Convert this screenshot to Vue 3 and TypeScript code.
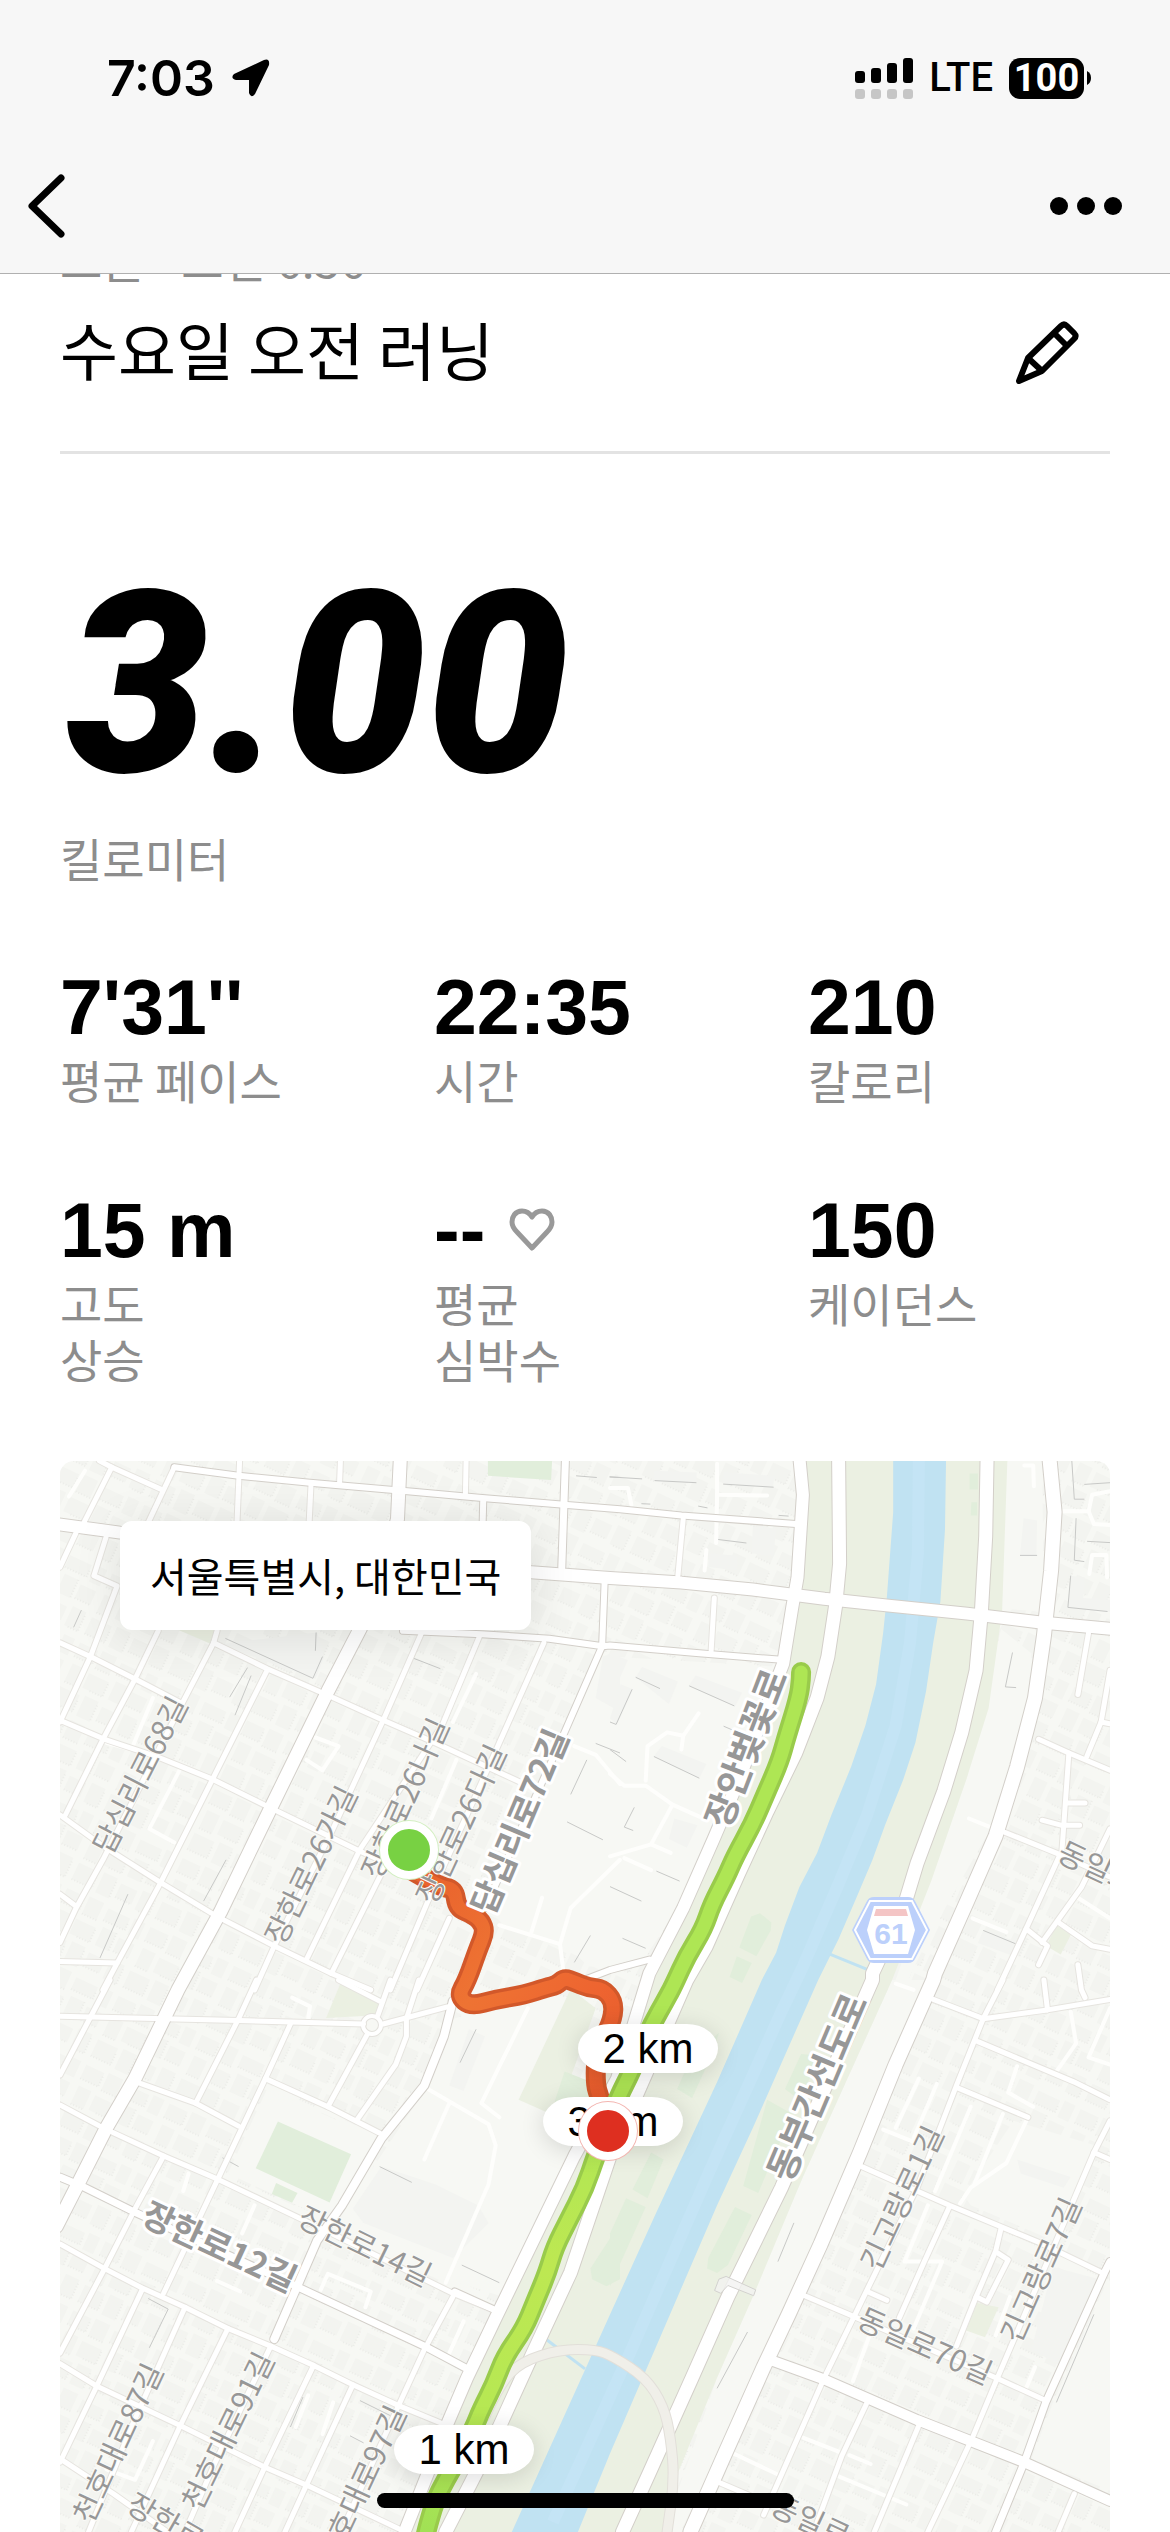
<script setup lang="ts">
interface Stat {
  value: string
  label: string[]
  heart?: boolean
}

const stats: Stat[] = [
  { value: "7'31''", label: ['평균 페이스'] },
  { value: '22:35', label: ['시간'] },
  { value: '210', label: ['칼로리'] },
  { value: '15 m', label: ['고도', '상승'] },
  { value: '--', label: ['평균', '심박수'], heart: true },
  { value: '150', label: ['케이던스'] },
]

type Sheet = 'nw' | 'ne' | 'sw' | 'se'
const sheets: Record<Sheet, { x: number; y: number; kx: number; ky: number }> = {
  nw: { x: 0, y: -11, kx: 2.8, ky: 2.904 },
  ne: { x: 550, y: -11, kx: 2.8, ky: 2.904 },
  sw: { x: 0, y: 519, kx: 2.8, ky: 2.841 },
  se: { x: 550, y: 519, kx: 2.8, ky: 2.841 },
}

/* "nw 0,10 20,30 se 5,5" becomes a list of map positions. */
function project(line: string): number[][] {
  let sheet = sheets.nw
  const out: number[][] = []
  for (const token of line.trim().split(/\s+/)) {
    if (token in sheets) {
      sheet = sheets[token as Sheet]
    } else {
      const [a, b] = token.split(',').map(Number)
      out.push([Math.round((a / sheet.kx + sheet.x) * 10) / 10, Math.round((b / sheet.ky + sheet.y) * 10) / 10])
    }
  }
  return out
}
const poly = (line: string): string => project(line).map((p) => p.join(',')).join(' ')

/* Smooth curve through the middle of each segment. */
function curve(line: string): string {
  const p = project(line)
  let d = `M${p[0]}`
  for (let i = 1; i < p.length - 1; i++) {
    const mx = (p[i][0] + p[i + 1][0]) / 2
    const my = (p[i][1] + p[i + 1][1]) / 2
    d += `Q${p[i]} ${mx},${my}`
  }
  return d + `L${p[p.length - 1]}`
}

const parkland = poly(
  'ne 550,20 550,130 540,400 510,560 480,700 400,900 300,1130 210,1330 sw 1640,0 1440,470 1220,960 1100,1260 960,1568 se 150,1568 190,1400 300,1130 400,900 540,560 790,0 ne 900,1250 1000,950 1060,750 1098,470 1113,20',
)
const river = poly(
  'ne 793,20 793,180 775,430 765,530 745,680 715,800 675,920 620,1060 580,1170 530,1270 490,1380 465,1460 se 425,0 300,290 130,660 0,950 sw 1265,1568 1450,1568 se 0,1345 100,1110 300,640 400,420 583,0 ne 640,1420 690,1300 735,1190 770,1090 820,960 855,850 885,700 905,560 925,440 938,230 941,20',
)
const riverGlow = poly('ne 865,20 862,300 840,560 800,800 720,1060 640,1260 540,1500 se 480,90 280,540 60,1050 sw 1380,1540')

const greens = [
  'nw 1198,31 1378,31 1375,87 1198,75',
  'sw 610,402 815,495 755,632 548,535',
  'sw 605,577 665,605 650,633 593,608',
  'sw 1413,260 1500,295 1470,385 1385,345',
  'ne 1007,68 1030,68 1030,115 1007,115',
  'ne 1012,152 1028,152 1028,190 1010,190',
  'ne 395,1355 420,1345 452,1372 450,1395 410,1470 362,1445',
  'ne 355,1470 397,1490 370,1548 335,1530',
  'se 225,225 305,150 290,200 230,335 188,310',
  'se 115,490 150,510 105,620 63,595',
  'se 45,620 100,645 0,870 0,720',
  'se 440,340 510,380 415,605 373,585',
  'se 350,645 397,668 330,810 300,832 272,820 275,790',
  'se 535,210 590,215 530,340 490,310',
  'sw 1568,690 1568,850 1530,870 1490,850 1485,820',
].map(poly)
const fields = [
  'nw 325,520 435,520 420,562',
  'sw 785,10 905,60 890,100 745,108',
  'sw 1430,25 1284,340 1390,388 1500,80',
  'ne 1250,1380 1292,1405 1262,1465 1222,1440',
  'se 1015,915 1088,930 1050,1015 995,995',
].map(poly)
const blocks = [
  'nw 445,565 520,555 720,530 740,600 715,665',
  'nw 1520,600 1568,580 1568,760 1500,720',
  'ne 0,590 50,610 20,680 0,690',
  'ne 90,630 190,672 165,738 72,660',
  'ne 240,655 370,705 350,745 220,685',
  'ne 145,860 270,912 250,953 123,890',
  'ne 30,680 65,695 20,797 0,780',
  'ne 180,1070 245,1090 215,1155 165,1130',
  'ne 318,65 460,75 457,107 317,98',
  'ne 125,60 243,65 241,95 124,90',
  'ne 400,222 465,228 458,308 396,300',
  'ne 277,300 357,307 355,350 275,340',
  'ne 1290,365 1330,370 1325,430 1400,435 1400,470 1282,457',
  'ne 1158,198 1196,205 1194,306 1148,306',
  'ne 1045,1395 1145,1430 1125,1468 1030,1432',
  'sw 1145,140 1190,160 1130,315 1090,300',
  'sw 900,530 1050,580 1170,640 1200,690 1100,790 850,690 820,650',
  'se 1140,510 1290,560 1270,590 1150,550',
  'se 1240,815 1370,850 1270,1100 1180,1050',
].map(poly)
/* Ground without houses on it. */
const yards = [
  'nw 1520,600 1568,590 ne 0,600 480,630 400,860 300,1100 190,1330 100,1470 0,1500 nw 1480,1500 1420,1440 1250,1390 1200,1330 1400,870',
  'sw 1100,110 1290,60 1500,40 1400,380 1440,480 1240,900 800,760 740,740 1010,330',
  'sw 580,310 890,450 750,680 470,550',
  'ne 1110,31 1210,31 1215,470 1090,460',
  'ne 1095,520 1180,590 1170,720 1060,1110 900,1400 820,1568 790,1568 1000,950',
  'se 790,0 890,0 690,460 430,1060 180,1568 150,1568 300,1130 540,560',
  'se 1130,400 1360,470 1240,740 1010,640 990,610',
  'se 1390,860 1400,860 1400,1450 1180,1360 1240,1200',
].map(poly)

/* w is the width of the white carriageway. */
const lanes: { w: number; at: string }[] = [
  ...[
    'nw 110,31 145,50 285,115', 'nw 145,50 65,215', 'nw 320,50 245,215', 'nw 503,31 495,225', 'nw 703,95 697,225',
    'nw 785,31 783,95', 'nw 1137,31 1135,130', 'nw 45,240 0,340', 'nw 130,250 95,365 160,395 85,600 0,790',
    'nw 275,525 210,665 120,840 15,1060', 'nw 440,525 430,560 340,740 120,1190 45,1330 0,1430',
    'nw 580,640 430,950 280,1260 160,1490 120,1568', 'sw 140,0 0,270',
    'nw 1015,525 905,785 760,1110 600,1440 545,1568', 'sw 550,0 500,110 380,350',
    'nw 1175,540 1070,800 840,1160 690,1480', 'nw 950,1120 900,1230 760,1520', 'nw 1355,560 1200,920 1030,1310 925,1568',
    'nw 1090,1360 1000,1568', 'nw 0,560 85,600 210,665 340,735', 'nw 430,560 580,635 745,710 905,785 1050,850 1300,970',
    'nw 0,785 125,840 270,890 425,955 590,1040 840,1165 960,1220', 'nw 0,1060 120,1150 280,1255 440,1355 600,1440 760,1520 870,1568',
    'sw 780,0 895,60', 'nw 0,1290 45,1325', 'nw 0,1485 160,1490',
    'sw 0,103 500,115 850,125', 'sw 905,125 1090,75', 'sw 925,0 890,100', 'sw 1005,0 970,110 970,160 940,240 830,400',
    'sw 860,155 750,360', 'sw 645,125 575,280 440,570 290,890', 'sw 575,280 750,360 905,440', 'sw 215,290 380,350 500,415',
    'sw 0,355 130,425 290,500 440,565 760,720 1100,890 1220,940', 'sw 290,500 210,650 125,820 0,1060',
    'sw 0,750 125,820 230,875 350,930 470,990 590,1040 710,1095 820,1150 950,1210 1070,1260',
    'sw 230,880 100,1160 0,1370', 'sw 350,930 200,1270 80,1568', 'sw 470,990 335,1270 200,1568', 'sw 590,1040 430,1380 350,1568',
    'sw 0,1090 105,1155 335,1265 575,1385 690,1435 950,1560', 'sw 710,1095 575,1380 490,1568', 'sw 820,1150 690,1435 630,1568',
    'sw 1100,900 1020,1050 945,1215 800,1540', 'sw 0,1360 150,1460 300,1568',
    'ne 205,200 190,365', 'ne 292,430 283,585', 'ne 1340,530 1310,710', 'ne 1400,640 1375,790 1335,890', 'ne 1375,790 1400,795',
    'ne 1200,840 1285,880 1400,930', 'ne 1285,880 1265,1170', 'ne 1280,1025 1330,1025', 'ne 1210,1075 1265,1090 1315,1090',
    'ne 1105,1110 1260,1175 1400,1240', 'ne 1260,1175 1165,1390 1085,1568', 'ne 1400,1100 1320,1270 1210,1430',
    'ne 1165,1390 1225,1440 1200,1495', 'ne 1260,1375 1350,1440 1400,1450', 'ne 1310,1495 1320,1568 se 1330,50', 'se 1215,0 1225,85',
    'se 905,55 1045,110 1225,85 1400,55', 'se 1100,0 1045,110 970,300 860,590 720,880 600,1130 430,1520',
    'se 1030,175 1300,290 1400,340', 'se 970,305 1170,390', 'se 705,530 950,640 1200,745 1385,835',
    'se 1400,400 1355,490 1250,740 1085,1130 1015,1300 950,1440 890,1568', 'se 1355,490 1400,510', 'se 950,645 880,800 810,960',
    'se 1095,705 1080,770 1025,900 970,1040', 'se 1085,775 1115,795 1055,915 1025,900', 'se 720,885 775,910',
    'se 540,895 680,955 1080,1130 1220,1195', 'se 720,1200 650,1350 570,1568', 'se 865,1265 740,1568',
    'se 1300,1460 1255,1568', 'se 300,1425 450,1490',
  ].map((at) => ({ w: 5, at })),
]
const roads: { w: number; at: string }[] = [
  { w: 6, at: 'nw 320,50 500,75 700,95 950,118 1190,140 1420,160 ne 28,172 200,190 520,215' },
  { w: 6, at: 'nw 960,525 1180,535 1370,548 1520,570 ne 0,568 250,590 490,610' },
  { w: 7, at: 'nw 1415,31 1405,340' },
  { w: 6, at: 'nw 1185,150 1183,230' },
  { w: 6, at: 'nw 1525,385 1518,570 1400,850 1190,1330' },
  { w: 6, at: 'ne 110,1480 0,1510 nw 1440,1550' },
  { w: 8, at: 'sw 1100,60 1075,160 1020,300 900,450 790,640 720,740 660,880 600,1020' },
  { w: 7, at: 'sw 0,560 60,585 210,660 640,860 1020,1040 1150,1110' },
  { w: 6, at: 'sw 1105,885 1225,940' },
  { w: 10, at: 'se 450,1080 600,1135 860,1250 1160,1370 1400,1480' },
  { w: 7, at: 'se 1400,800 1385,830 1220,1200 1160,1370 1080,1568' },
  { w: 13, at: 'nw 953,20 945,200 900,380 840,520 750,700 590,1040 450,1340 330,1568 sw 210,280 130,420 50,580 -10,700' },
  { w: 12, at: 'ne 530,20 540,130 525,370 510,460 485,620 360,960 290,1130 205,1330 110,1520 sw 1560,280 1440,500 1220,960 1140,1130 1085,1260 965,1568' },
  { w: 13, at: 'ne 640,20 643,330 632,450 610,600 580,720 520,880 440,1050 360,1230 270,1440 se 215,0 120,220 0,500 sw 1430,830 1320,1070 1230,1270 1150,1430 1080,1568' },
  { w: 13, at: 'ne 1056,20 1052,250 1040,470 1025,640 985,820 935,990 860,1200 825,1320 735,1520 se 735,0 600,310 480,590 330,900 230,1130 110,1400 35,1568' },
  { w: 14, at: 'ne 1230,20 1245,180 1235,350 1215,540 1190,720 1140,920 1080,1120 1000,1310 910,1520 se 905,0 800,240 700,490 590,750 500,950 430,1100 320,1350 225,1568' },
  { w: 12, at: 'nw -10,215 168,240 700,295 1320,355 ne 0,372 200,385 400,405 600,432 780,452 1000,475 1200,500 1410,520' },
]
const alleys = [
  'nw 1440,860 1500,885 1568,970', 'nw 1230,1380 1400,1435 1410,1520', 'nw 1400,1435 1430,1330 1568,1190',
  'ne 0,940 40,975 100,975 175,1030 115,1145 0,1180', 'ne 175,1030 250,1065', 'ne 115,1145 170,1170', 'ne 40,1185 115,1220',
  'ne 100,960 105,860 160,820 205,830 248,765', 'ne 205,830 200,870', 'ne 300,40 300,130 440,132', 'ne 300,130 297,270', 'ne 270,290 265,350',
  'ne 0,110 50,110 60,160', 'ne 1270,178 1340,178 1350,130 1400,120', 'ne 1340,178 1355,215 1400,218', 'ne 1342,360 1350,305 1390,305 1392,370',
  'sw 1310,80 1180,350 1230,390', 'sw 1030,310 1200,410 1220,470 1200,580 1080,860', 'sw 1090,350 1020,510', 'sw 1130,970 1090,1060',
  'sw 360,550 345,600', 'sw 545,640 510,720', 'sw 730,880 750,835 870,885 855,930', 'sw 440,855 505,885',
  'sw 695,1180 660,1270', 'sw 765,1200 735,1290', 'sw 130,1390 210,1420 260,1310', 'sw 650,50 700,75 695,110', 'nw 690,900 735,930 780,860 715,835',
  'nw 130,850 200,870 260,720', 'nw 335,930 250,1100 320,1140', 'nw 1110,900 1040,1070', 'nw 1165,650 1100,790', 'nw 1350,1300 1320,1400',
  'nw 70,60 25,135', 'se 865,280 800,420', 'se 915,295 850,450', 'se 1010,360 910,600', 'se 765,425 850,460', 'se 1170,390 1110,520 1010,590 980,635',
  'se 1100,380 1020,580', 'se 1140,245 1115,320 1185,360', 'se 890,640 825,800 930,800 850,990', 'se 1290,90 1305,180 1250,260', 'se 1400,80 1340,220 1400,240',
  'se 1120,900 1080,1010', 'se 730,1000 680,1140', 'se 540,1300 640,1340', 'se 640,1410 830,1490', 'se 670,1350 730,1375', 'se 345,1345 470,1405', 'se 1190,1100 1165,1160',
  'ne 1005,1070 1065,1095', 'ne 1015,1360 1110,1400', 'ne 1310,1300 1400,1360', 'ne 800,1550 850,1568', 'ne 1160,45 1185,45 1187,105',
].map(poly)
const walls = [
  'nw 463,547 708,663 735,600', 'nw 717,530 715,583', 'nw 1445,75 1503,80', 'nw 1538,78 1568,80', 'nw 525,632 475,718', 'nw 465,1190 402,1310',
  'nw 190,1290 112,1475', 'nw 535,655 490,770', 'nw 60,465 38,515', 'nw 990,605 1065,635', 'nw 1475,900 1430,1000', 'nw 1500,852 1568,880',
  'nw 1485,1410 1440,1488', 'nw 630,1300 580,1395', 'nw 1420,1080 1520,1132',
  'ne 0,78 90,84', 'ne 125,89 242,95', 'ne 317,99 458,108', 'ne 88,156 113,157', 'ne 247,163 273,168', 'ne 472,190 500,192', 'ne 303,260 382,270',
  'ne 72,660 140,693', 'ne 222,685 348,743', 'ne 123,890 250,953', 'ne 318,802 370,825', 'ne 62,695 17,797 0,790', 'ne 0,870 45,905', 'ne 130,1223 195,1252', 'ne 0,1268 88,1310',
  'ne 1293,31 1300,143 1328,143', 'ne 1328,100 1400,95', 'ne 1305,198 1300,320 1328,324', 'ne 1336,265 1400,269', 'ne 1290,365 1282,457 1393,469',
  'ne 1148,306 1196,306', 'ne 1127,588 1107,688 1137,690', 'ne 1045,1395 1150,1440', 'ne 35,1418 100,1447', 'ne 68,1038 40,1095 65,1105',
  'sw 247,905 303,935 250,1045', 'sw 895,530 985,575', 'sw 1125,810 1230,860', 'sw 500,530 455,505', 'sw 1165,140 1120,235', 'sw 680,1185 645,1270', 'sw 812,1295 850,1315',
  'sw 840,1195 930,1240', 'sw 330,0 250,180', 'se 1355,950 1250,1200', 'se 515,690 470,800', 'se 385,1000 300,1160',
].map(poly)

const track = curve(
  'ne 535,645 535,665 528,720 495,830 475,905 435,1000 400,1085 350,1180 325,1240 285,1320 262,1390 215,1470 180,1550 se 165,40 110,140 60,260 20,340 sw 1500,500 1470,590 1425,680 1385,760 1365,830 1330,915 1300,990 1245,1070 1215,1150 1180,1220 1160,1270 1120,1350 1080,1420 1050,1480 1025,1568 1020,1600',
)
const detour = curve(
  'nw 975,1215 1060,1268 1105,1275 1112,1330 1150,1345 1180,1368 1190,1400 1170,1450 1140,1540 sw 1115,45 1150,75 1220,55 1300,42 1360,22 1390,15 1412,-5 1440,5 1480,22 1520,25 1550,60 1548,110 1520,170 1500,230 1500,300 1510,330 1535,420',
)
const footbridge = curve(
  'sw 1190,1240 1230,1150 1290,1085 1400,1050 1500,1050 se 10,1070 100,1130 150,1210 170,1300 180,1420 160,1568',
)

interface MapLabel {
  text: string
  x: number
  y: number
  turn: number
  kind: 'lane' | 'street' | 'avenue'
  fromStart?: boolean
}
const labels: MapLabel[] = [
  { text: '답십리로68길', x: 80, y: 314, turn: -63, kind: 'lane' },
  { text: '장한로26가길', x: 251, y: 404, turn: -64, kind: 'lane' },
  { text: '장한로26나길', x: 345, y: 337, turn: -66, kind: 'lane' },
  { text: '장한로26다길', x: 401, y: 363, turn: -65, kind: 'lane' },
  { text: '답십리로72길', x: 461, y: 361, turn: -67, kind: 'street' },
  { text: '장안벚꽃로', x: 688, y: 288, turn: -69, kind: 'avenue' },
  { text: '동일로', x: 1000, y: 389, turn: 25, kind: 'lane', fromStart: true },
  { text: '장한로12길', x: 159, y: 787, turn: 25, kind: 'street' },
  { text: '장한로14길', x: 305, y: 785, turn: 26, kind: 'lane' },
  { text: '천호대로87길', x: 58, y: 982, turn: -65, kind: 'lane' },
  { text: '천호대로91길', x: 168, y: 970, turn: -64, kind: 'lane' },
  { text: '천호대로97길', x: 301, y: 1024, turn: -65, kind: 'lane' },
  { text: '장한로', x: 70, y: 1040, turn: 30, kind: 'lane', fromStart: true },
  { text: '동부간선도로', x: 759, y: 627, turn: -67, kind: 'avenue' },
  { text: '긴고랑로1길', x: 842, y: 737, turn: -65, kind: 'lane' },
  { text: '긴고랑로7길', x: 981, y: 809, turn: -66, kind: 'lane' },
  { text: '동일로70길', x: 865, y: 885, turn: 24, kind: 'lane' },
  { text: '동일로', x: 713, y: 1042, turn: 25, kind: 'lane', fromStart: true },
]

const pins = [
  { text: '1 km', x: 404, y: 989 },
  { text: '2 km', x: 588, y: 588 },
  { text: '3 km', x: 553, y: 661 },
]
const ends = [
  { name: 'start', x: 349, y: 389 },
  { name: 'finish', x: 548, y: 670 },
]
const place = (p: { x: number; y: number }) => ({
  left: `${(p.x / 1050) * 100}%`,
  top: `${(p.y / 1071) * 100}%`,
})
</script>

<template>
  <div class="screen">
    <header class="top">
      <div class="status">
        <div class="clock">
          <span>7:03</span>
          <svg width="40" height="40" viewBox="0 0 40 40" aria-hidden="true">
            <path d="M3 16 33 2Q39 0 38 7L24 36Q20 41 18 35V22H5Q-1 20 3 16Z" />
          </svg>
        </div>
        <div class="signals">
          <svg width="58" height="41" viewBox="0 0 58 41" aria-hidden="true">
            <rect x="0" y="13" width="10" height="12" rx="3" />
            <rect x="16" y="10" width="10" height="15" rx="3" />
            <rect x="32" y="5" width="10" height="20" rx="3" />
            <rect x="48" y="0" width="10" height="25" rx="3" />
            <g fill="#c6c6c6">
              <rect v-for="x in [0, 16, 32, 48]" :key="x" :x="x" y="31" width="10" height="10" rx="3" />
            </g>
          </svg>
          <span class="lte">LTE</span>
          <div class="battery">
            <span class="level">100</span>
            <svg width="4" height="14" viewBox="0 0 4 14" aria-hidden="true"><path d="M0 0Q4 2 4 7T0 14Z" /></svg>
          </div>
        </div>
      </div>
      <nav class="nav">
        <button type="button" aria-label="뒤로">
          <svg width="40" height="66" viewBox="0 0 40 66" aria-hidden="true">
            <path d="M35 5 6 33 35 61" fill="none" stroke="#000" stroke-width="7" stroke-linecap="round" stroke-linejoin="round" />
          </svg>
        </button>
        <button type="button" aria-label="더 보기">
          <svg width="72" height="18" viewBox="0 0 72 18" aria-hidden="true">
            <circle cx="9" cy="9" r="9" /><circle cx="36" cy="9" r="9" /><circle cx="63" cy="9" r="9" />
          </svg>
        </button>
      </nav>
    </header>

    <main class="content">
      <p class="date">오늘 - 오전 6:36</p>
      <div class="heading">
        <h1>수요일 오전 러닝</h1>
        <button type="button" aria-label="이름 편집">
          <svg width="66" height="66" viewBox="0 0 66 66" aria-hidden="true">
            <g fill="none" stroke="#000" stroke-width="6" stroke-linejoin="round">
              <path d="M5 61 14 38 47 6Q50 3 53 6L60 13Q63 16 60 19L28 51Z" />
              <path d="M40 13 53 26M14 38 28 51" />
            </g>
          </svg>
        </button>
      </div>
      <hr />
      <p class="distance">3.00</p>
      <p class="unit">킬로미터</p>

      <dl class="stats">
        <div v-for="stat in stats" :key="stat.value" class="stat">
          <dd>
            <span>{{ stat.value }}</span>
            <svg v-if="stat.heart" width="46" height="44" viewBox="0 0 46 44" aria-hidden="true">
              <path
                d="M23 9C20 4 16 3 13 3 6 3 3 9 3 14 3 19 6 22 8 24L23 40 38 24C40 22 43 19 43 14 43 9 40 3 33 3 30 3 26 4 23 9Z"
                fill="none" stroke="#999" stroke-width="5" stroke-linejoin="round"
              />
            </svg>
          </dd>
          <dt><span v-for="line in stat.label" :key="line">{{ line }}</span></dt>
        </div>
      </dl>

      <section class="map" aria-label="러닝 경로">
        <svg class="tiles" viewBox="0 0 1050 1071" preserveAspectRatio="xMidYMin slice">
          <defs>
            <pattern id="houses" width="92" height="76" patternUnits="userSpaceOnUse" patternTransform="rotate(25)">
              <g fill="#f3f4f0">
                <rect x="3" y="4" width="20" height="15" /><rect x="27" y="2" width="16" height="19" />
                <rect x="49" y="5" width="24" height="13" /><rect x="77" y="3" width="12" height="18" />
                <rect x="5" y="26" width="14" height="20" /><rect x="24" y="28" width="22" height="16" />
                <rect x="52" y="24" width="15" height="20" /><rect x="71" y="27" width="17" height="15" />
                <rect x="3" y="52" width="22" height="18" /><rect x="30" y="50" width="15" height="22" />
                <rect x="50" y="53" width="18" height="15" /><rect x="73" y="50" width="15" height="21" />
              </g>
              <path
                d="M3 19H23V8M27 21H43M49 18H73V9M5 46H19M46 30V44H30M67 24V44M71 42H88M3 70H25V58M45 54V72M50 68H68M88 54V71H76"
                fill="none" stroke="#e3e4e0" stroke-width="1" stroke-dasharray="1 2"
              />
            </pattern>
            <linearGradient id="pace" x1="0" y1="0" x2="0" y2="1">
              <stop offset="0" stop-color="#aee654" /><stop offset=".5" stop-color="#aee654" />
              <stop offset=".68" stop-color="#bde852" /><stop offset=".85" stop-color="#b6e853" />
              <stop offset="1" stop-color="#9fe055" />
            </linearGradient>
            <linearGradient id="effort" x1="0" y1="0" x2="1" y2="1">
              <stop offset="0" stop-color="#e8602c" /><stop offset=".4" stop-color="#ee7333" />
              <stop offset=".7" stop-color="#ee6430" /><stop offset="1" stop-color="#e2582b" />
            </linearGradient>
          </defs>

          <rect width="1050" height="1071" fill="#f7f8f4" />
          <rect width="1050" height="1071" fill="url(#houses)" />
          <polygon v-for="y in yards" :key="y" :points="y" fill="#f7f8f4" />
          <polygon v-for="b in blocks" :key="b" :points="b" fill="#f3f4f1" />
          <polygon :points="parkland" fill="#ebf0e2" />
          <polygon v-for="f in fields" :key="f" :points="f" fill="#ebf0e2" />
          <polygon v-for="g in greens" :key="g" :points="g" fill="#e1eedb" />
          <polygon :points="river" fill="#c0e2f2" />
          <polyline :points="riverGlow" fill="none" stroke="#c4e4f5" stroke-width="12" />
          <g fill="none" stroke="#c0e2f2" stroke-width="3">
            <polyline :points="poly('ne 610,1462 720,1508')" />
            <polyline :points="poly('sw 1360,1020 1470,1105')" />
          </g>
          <g fill="none" stroke="#fefefc" stroke-width="4" stroke-linecap="round" stroke-linejoin="round">
            <polyline v-for="a in alleys" :key="a" :points="a" />
          </g>
          <g fill="none" stroke="#c8c9c7" stroke-width="1">
            <polyline v-for="w in walls" :key="w" :points="w" />
          </g>
          <g fill="none" stroke-linejoin="round" stroke-linecap="round">
            <polyline v-for="l in lanes" :key="l.at" :points="poly(l.at)" stroke="#e6e4df" :stroke-width="l.w + 2" />
            <circle cx="312" cy="564" r="9" stroke="#e3e1dc" stroke-width="6" />
            <polyline v-for="r in roads" :key="r.at" :points="poly(r.at)" stroke="#d3cfc9" :stroke-width="r.w + 2" />
            <polyline v-for="l in lanes" :key="l.at" :points="poly(l.at)" stroke="#fff" :stroke-width="l.w" />
            <circle cx="312" cy="564" r="9" stroke="#fff" stroke-width="4" />
            <polyline v-for="r in roads" :key="r.at" :points="poly(r.at)" stroke="#fff" :stroke-width="r.w" />
            <path :d="footbridge" stroke="#e2dfd9" stroke-width="11" />
            <path :d="footbridge" stroke="#f0efe9" stroke-width="9" />
          </g>
          <polygon
            :points="poly('se 293,882 305,850 325,842 408,880 402,897 330,868 310,890')"
            fill="#f3f3f1" fill-opacity=".8" stroke="#d3d2cf"
          />

          <g fill="none" stroke-linecap="round" stroke-linejoin="round">
            <path :d="detour" stroke="#d2582a" stroke-width="20" />
            <path :d="detour" stroke="url(#effort)" stroke-width="13" />
            <path :d="track" stroke="#99cb4b" stroke-width="20" />
            <path :d="track" stroke="url(#pace)" stroke-width="13" />
          </g>

          <g transform="translate(831 469)">
            <path d="M-39 0-24-29Q-22-33-17-33H17Q22-33 24-29L39 0 24 29Q22 33 17 33H-17Q-22 33-24 29Z" fill="#bcd0fb" />
            <path d="M-36 0-21-29H21L36 0 21 29H-21Z" fill="none" stroke="#fff" stroke-width="2" />
            <path d="M-24 0-17-24H17L24 0 17 24H-17Z" fill="#fff" />
            <path d="M-15-21H15L17-14H-17Z" fill="#f4c5c5" />
            <text class="route-number" x="0" y="14">61</text>
          </g>

          <text
            v-for="l in labels" :key="l.text + l.x"
            :class="['label', l.kind, { 'from-start': l.fromStart }]"
            :transform="`translate(${l.x} ${l.y}) rotate(${l.turn})`" y="11"
          >{{ l.text }}</text>
        </svg>

        <span v-for="pin in pins" :key="pin.text" class="pin" :style="place(pin)">{{ pin.text }}</span>
        <i v-for="end in ends" :key="end.name" :class="['end', end.name]" :style="place(end)"></i>
        <p class="place">서울특별시, 대한민국</p>
      </section>
    </main>
    <div class="home"></div>
  </div>
</template>

<style>
body {
  background: #fff;
}
</style>

<style scoped>
.screen {
  height: 100vh;
  overflow: hidden;
  font-family: "Noto Sans CJK KR", sans-serif;
  color: #000;
}
p, h1, dl, dd, dt, hr {
  margin: 0;
}
svg {
  display: block;
  flex: none;
}
button {
  display: flex;
  padding: 0;
  border: 0;
  background: none;
}
.top {
  position: relative;
  z-index: 2;
  background: #f7f7f7;
  border-bottom: 1px solid #b0b0b0;
}
.status {
  display: flex;
  align-items: center;
  justify-content: space-between;
  box-sizing: border-box;
  height: 139px;
  padding: 17px 79px 0 107px;
  font-family: Inter, sans-serif;
}
.clock, .signals, .battery {
  display: flex;
  align-items: center;
}
.clock {
  gap: 16px;
  font-size: 50px;
  font-weight: 600;
  line-height: 60px;
}
.signals {
  gap: 16px;
}
.lte {
  font-family: Roboto, sans-serif;
  font-size: 40px;
  font-weight: 500;
  line-height: 42px;
}
.battery {
  gap: 3px;
}
.level {
  width: 75px;
  border-radius: 11px;
  background: #000;
  color: #fff;
  font-family: Roboto, sans-serif;
  font-size: 38px;
  font-weight: 700;
  line-height: 41px;
  text-align: center;
}
.nav {
  display: flex;
  align-items: center;
  justify-content: space-between;
  height: 134px;
  padding: 0 48px 0 26px;
}
.content {
  padding: 0 60px;
}
.date, .unit, dt {
  color: #8d8d8d;
  font-size: 46px;
  line-height: 56px;
}
.date {
  margin-top: -44px;
}
.heading {
  display: flex;
  align-items: center;
  justify-content: space-between;
  height: 134px;
  margin-bottom: 31px;
  padding-right: 30px;
}
h1 {
  padding-bottom: 10px;
  font-size: 63px;
  font-weight: 400;
  line-height: 88px;
}
hr {
  height: 3px;
  border: 0;
  background: #e3e3e3;
}
.distance {
  margin-top: 102px;
  padding-left: 6px;
  font-family: Roboto, sans-serif;
  font-size: 254px;
  font-style: italic;
  font-weight: 900;
  line-height: 256px;
}
.unit {
  margin-top: 17px;
}
.stats {
  display: grid;
  grid-template-columns: repeat(3, 1fr);
  gap: 75px 72px;
  margin: 78px 0 73px;
}
dd {
  display: flex;
  align-items: center;
  gap: 24px;
  font-family: "Liberation Sans", sans-serif;
  font-size: 77px;
  font-weight: 700;
  line-height: 88px;
}
dt {
  padding-bottom: 4px;
}
dt span {
  display: block;
}
.stat {
  display: flex;
  flex-direction: column;
}
.map {
  position: relative;
  margin-top: -2px;
  aspect-ratio: 1050 / 1071;
  border-radius: 14px 14px 0 0;
  overflow: hidden;
}
.tiles {
  width: 100%;
  height: 100%;
}
.label {
  fill: #979797;
  font-size: 30px;
  text-anchor: middle;
  paint-order: stroke;
  stroke: #fbfbf8;
  stroke-width: 2px;
  stroke-linejoin: round;
}
.label.from-start {
  text-anchor: start;
}
.label.street {
  font-size: 34px;
  font-weight: 700;
  stroke: #fff;
  stroke-width: 6px;
}
.label.avenue {
  font-size: 36px;
  font-weight: 700;
  stroke: #fff;
  stroke-width: 6px;
}
.route-number {
  fill: #bcd0fb;
  font-family: "Liberation Sans", sans-serif;
  font-size: 30px;
  font-weight: 700;
  text-anchor: middle;
}
.pin {
  position: absolute;
  width: 140px;
  height: 49px;
  margin: -25px 0 0 -70px;
  border-radius: 32px / 25px;
  background: #fff;
  box-shadow: 0 4px 24px rgba(0, 0, 0, 0.14);
  font-family: "Liberation Sans", sans-serif;
  font-size: 42px;
  line-height: 50px;
  text-align: center;
}
.end {
  position: absolute;
  box-sizing: border-box;
  width: 58px;
  height: 58px;
  margin: -29px 0 0 -29px;
  border: 8px solid #fff;
  border-radius: 50%;
}
.start {
  background: #78d143;
  box-shadow: 0 0 0 1px #d3efc2;
}
.finish {
  background: #de2f20;
  box-shadow: 0 0 0 1px #f3b5b0;
}
.place {
  position: absolute;
  top: 60px;
  left: 60px;
  padding: 0 30px;
  border-radius: 12px;
  background: #fff;
  box-shadow: 0 6px 48px rgba(0, 0, 0, 0.1);
  font-size: 40px;
  line-height: 109px;
}
.home {
  position: fixed;
  bottom: 24px;
  left: 50%;
  z-index: 3;
  width: 417px;
  height: 15px;
  margin-left: -208px;
  border-radius: 8px;
  background: #000;
}
</style>
